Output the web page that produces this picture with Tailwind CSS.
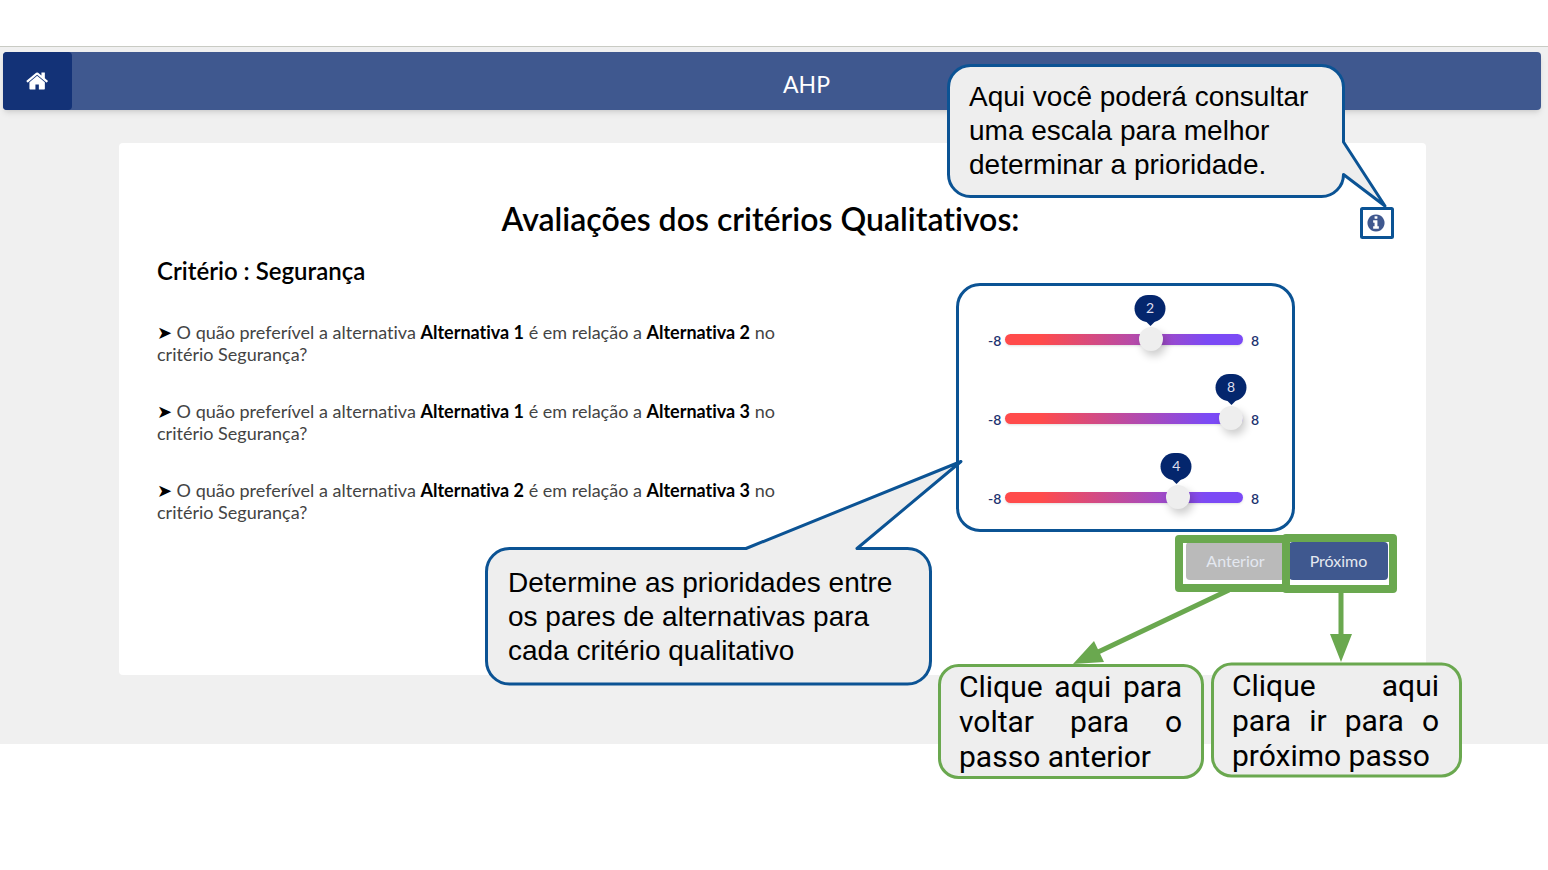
<!DOCTYPE html>
<html lang="pt-BR">
<head>
<meta charset="utf-8">
<title>AHP</title>
<script src="https://cdn.jsdelivr.net/npm/@tailwindcss/browser@4"></script>
</head>
<body class="min-h-screen bg-white pt-[46px] font-['Lato',sans-serif] text-black [font-variant-ligatures:none]">
<div class="border-t border-[#c9cbc4] bg-[#f0f0f0] pt-[5px] pr-[7px] pb-[69px] pl-[3px]">
  <header class="flex h-[58px] items-stretch rounded bg-[#3f588f] text-white shadow-md">
    <a href="#" aria-label="Início" class="flex w-[69px] items-center justify-center rounded bg-[#133277]">
      <svg class="size-6" viewBox="0 0 1792 1792" fill="currentColor" aria-hidden="true"><path d="M1408 992v480q0 26-19 45t-45 19h-384v-384h-256v384h-384q-26 0-45-19t-19-45v-480q0-1 .5-3t.5-3l575-474 575 474q1 2 1 6zm223-69l-62 74q-8 9-21 11h-3q-13 0-21-7l-692-577-692 577q-12 8-24 7-13-2-21-11l-62-74q-8-10-7-23.5t11-21.5l719-599q32-26 76-26t76 26l244 204v-195q0-14 9-23t23-9h192q14 0 23 9t9 23v408l219 182q10 8 11 21.5t-7 23.5z"/></svg>
    </a>
    <span class="flex-1 pt-4 text-center text-[23px] leading-8">AHP</span>
  </header>

  <main class="relative mt-[33px] mr-[115px] ml-[116px] rounded bg-white px-[38px] pt-14 pb-[95px]">
    <div class="flex items-center">
      <h1 class="flex-1 text-center text-[32px] leading-10 font-semibold">Avaliações dos critérios Qualitativos:</h1>
      <button type="button" aria-label="Escala de prioridade" class="mt-2 flex w-6 justify-center text-[#3f588f]">
        <svg class="size-5" viewBox="0 0 1792 1792" fill="currentColor" aria-hidden="true"><path d="M1152 1376v-160q0-14-9-23t-23-9h-96v-512q0-14-9-23t-23-9h-320q-14 0-23 9t-9 23v160q0 14 9 23t23 9h96v320h-96q-14 0-23 9t-9 23v160q0 14 9 23t23 9h448q14 0 23-9t9-23zm-128-896v-160q0-14-9-23t-23-9h-192q-14 0-23 9t-9 23v160q0 14 9 23t23 9h192q14 0 23-9t9-23zm640 416q0 209-103 385.5t-279.5 279.5-385.5 103-385.5-103-279.5-279.5-103-385.5 103-385.5 279.5-279.5 385.5-103 385.5 103 279.5 279.5 103 385.5z"/></svg>
      </button>
    </div>

    <div class="flex justify-between pt-4">
      <div class="w-[648px]">
        <h2 class="text-2xl leading-8 font-semibold">Critério : Segurança</h2>
        <div class="flex flex-col gap-[35px] pt-[34px] text-lg leading-[22px] text-[#444]">
          <p id="q1"><span class="text-black">➤</span> O quão preferível a alternativa <b class="text-black">Alternativa 1</b> é em relação a <b class="text-black">Alternativa 2</b> no critério Segurança?</p>
          <p id="q2"><span class="text-black">➤</span> O quão preferível a alternativa <b class="text-black">Alternativa 1</b> é em relação a <b class="text-black">Alternativa 3</b> no critério Segurança?</p>
          <p id="q3"><span class="text-black">➤</span> O quão preferível a alternativa <b class="text-black">Alternativa 2</b> é em relação a <b class="text-black">Alternativa 3</b> no critério Segurança?</p>
        </div>
      </div>

      <div class="mt-7 mr-[93px] flex h-[249px] w-[339px] flex-col gap-[55px] rounded-[24px] border-3 border-[#0b5394] pt-[41px] pl-[29px] text-sm text-[#1c3370]">
        <div class="flex h-6 items-center">
          <span class="w-[17px] pt-1 font-semibold">-8</span>
          <div class="relative flex w-[238px]">
            <input type="range" min="-8" max="8" value="2" aria-labelledby="q1" class="h-[11px] w-full appearance-none rounded-md bg-linear-to-r/srgb from-[#ff4b4b] from-15% to-[#7b4af5] to-85% shadow [&::-webkit-slider-thumb]:size-6 [&::-webkit-slider-thumb]:appearance-none [&::-webkit-slider-thumb]:rounded-full [&::-webkit-slider-thumb]:bg-[#eee] [&::-webkit-slider-thumb]:shadow-[3px_5px_8px_#0003]">
            <output class="absolute bottom-[23px] flex h-[27px] w-[31px] -translate-x-1/2 items-center justify-center rounded-full bg-[#04266d] text-[#dde] after:absolute after:top-full after:-mt-px after:border-x-5 after:border-t-5 after:border-x-transparent after:border-t-[#04266d]" style="left:61%">2</output>
          </div>
          <span class="pt-1 pl-2 font-semibold">8</span>
        </div>
        <div class="flex h-6 items-center">
          <span class="w-[17px] pt-1 font-semibold">-8</span>
          <div class="relative flex w-[238px]">
            <input type="range" min="-8" max="8" value="8" aria-labelledby="q2" class="h-[11px] w-full appearance-none rounded-md bg-linear-to-r/srgb from-[#ff4b4b] from-15% to-[#7b4af5] to-85% shadow [&::-webkit-slider-thumb]:size-6 [&::-webkit-slider-thumb]:appearance-none [&::-webkit-slider-thumb]:rounded-full [&::-webkit-slider-thumb]:bg-[#eee] [&::-webkit-slider-thumb]:shadow-[3px_5px_8px_#0003]">
            <output class="absolute bottom-[23px] flex h-[27px] w-[31px] -translate-x-1/2 items-center justify-center rounded-full bg-[#04266d] text-[#dde] after:absolute after:top-full after:-mt-px after:border-x-5 after:border-t-5 after:border-x-transparent after:border-t-[#04266d]" style="left:95%">8</output>
          </div>
          <span class="pt-1 pl-2 font-semibold">8</span>
        </div>
        <div class="flex h-6 items-center">
          <span class="w-[17px] pt-1 font-semibold">-8</span>
          <div class="relative flex w-[238px]">
            <input type="range" min="-8" max="8" value="4" aria-labelledby="q3" class="h-[11px] w-full appearance-none rounded-md bg-linear-to-r/srgb from-[#ff4b4b] from-15% to-[#7b4af5] to-85% shadow [&::-webkit-slider-thumb]:size-6 [&::-webkit-slider-thumb]:appearance-none [&::-webkit-slider-thumb]:rounded-full [&::-webkit-slider-thumb]:bg-[#eee] [&::-webkit-slider-thumb]:shadow-[3px_5px_8px_#0003]">
            <output class="absolute bottom-[23px] flex h-[27px] w-[31px] -translate-x-1/2 items-center justify-center rounded-full bg-[#04266d] text-[#dde] after:absolute after:top-full after:-mt-px after:border-x-5 after:border-t-5 after:border-x-transparent after:border-t-[#04266d]" style="left:72%">4</output>
          </div>
          <span class="pt-1 pl-2 font-semibold">8</span>
        </div>
      </div>
    </div>

    <div class="flex justify-end gap-1 pt-[10px] text-base text-[#e4e8f0]">
      <button type="button" class="h-[38px] w-[99px] rounded bg-[#bababa]">Anterior</button>
      <button type="button" class="h-[38px] w-[99px] rounded bg-[#3f588f]">Próximo</button>
    </div>

    <!-- Help callouts, anchored to the card's top right corner -->
    <div class="pointer-events-none absolute top-0 right-0 h-[640px] w-[940px] text-black">
      <svg class="absolute inset-0 overflow-visible" width="940" height="640" viewBox="486 143 940 640" aria-hidden="true">
        <g fill="#eee" stroke="#0b5394" stroke-width="3" stroke-linejoin="round">
          <path d="M970.500 65.500H1321.500A22 22 0 0 1 1343.500 87.500V142L1385 206L1343.500 174.500A22 22 0 0 1 1321.500 196.500H970.500A22 22 0 0 1 948.500 174.500V87.500A22 22 0 0 1 970.500 65.500Z"/>
          <path d="M509.500 548.500H746L961 461.500L857 548.500H907.500A23 23 0 0 1 930.500 571.500V661A23 23 0 0 1 907.500 684H509.500A23 23 0 0 1 486.500 661V571.500A23 23 0 0 1 509.500 548.500Z"/>
          <rect x="1361.500" y="208.500" width="31" height="29" rx="1" fill="none"/>
        </g>
        <g fill="none" stroke="#6aa84f" stroke-width="8" stroke-linejoin="round">
          <rect x="1179" y="539" width="107" height="49"/>
          <rect x="1286" y="538" width="107" height="51"/>
        </g>
        <g stroke="#6aa84f" fill="#6aa84f">
          <path d="M1229 590L1096 653M1341 592V638" stroke-width="5"/>
          <path d="M1330 634H1352L1341 662ZM1073 664L1094 641L1104 662Z" stroke="none"/>
        </g>
        <g fill="#eee" stroke="#6aa84f" stroke-width="3">
          <rect x="939.500" y="665.500" width="263" height="112" rx="19"/>
          <rect x="1212.500" y="664" width="248" height="112" rx="19"/>
        </g>
      </svg>
      <p class="absolute top-[-63px] left-[483px] w-[360px] font-['Liberation_Sans',sans-serif] text-[28px] leading-[34px]">Aqui você poderá consultar uma escala para melhor determinar a prioridade.</p>
      <p class="absolute top-[423px] left-[22px] w-[400px] font-['Liberation_Sans',sans-serif] text-[28px] leading-[34px]">Determine as prioridades entre os pares de alternativas para cada critério qualitativo</p>
      <p class="absolute top-[526px] left-[473px] w-[223px] text-justify font-['Roboto',sans-serif] text-[30px] leading-[35px]">Clique aqui para voltar para o passo anterior</p>
      <p class="absolute top-[525px] left-[746px] w-[207px] text-justify font-['Roboto',sans-serif] text-[30px] leading-[35px]">Clique aqui para ir para o próximo passo</p>
    </div>
  </main>
</div>
</body>
</html>
